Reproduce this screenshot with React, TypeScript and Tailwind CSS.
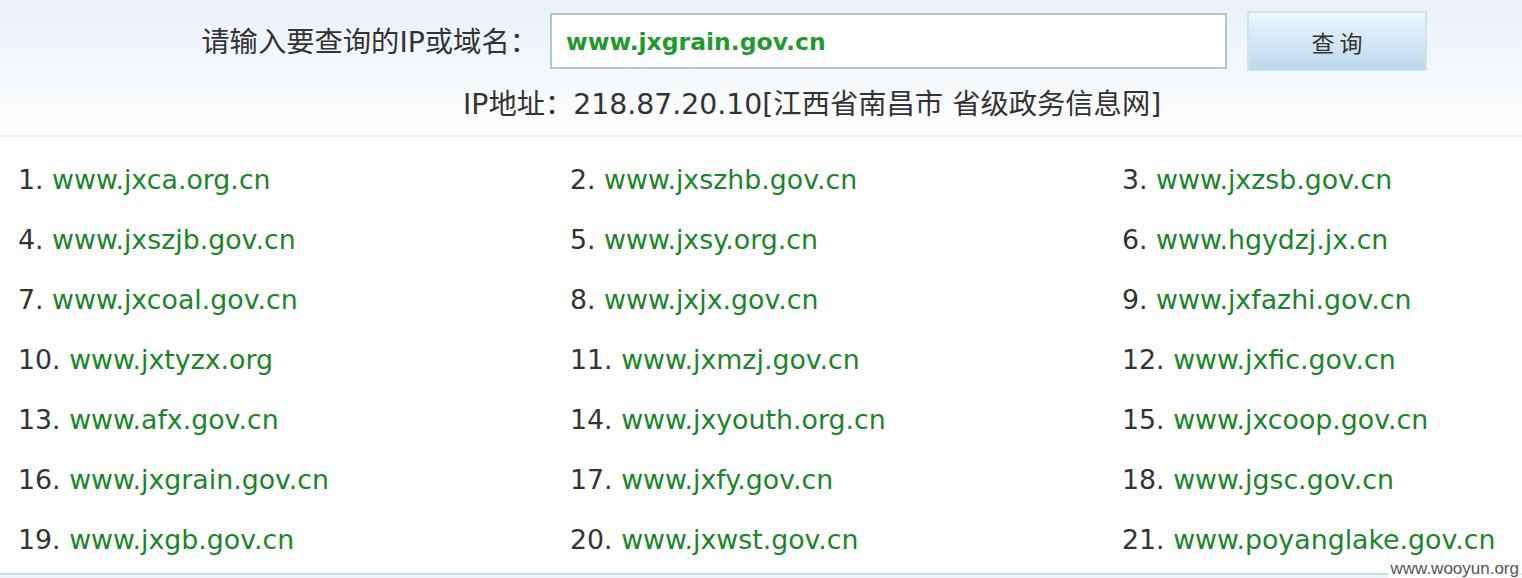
const sites = [
  'www.jxca.org.cn',
  'www.jxszhb.gov.cn',
  'www.jxzsb.gov.cn',
  'www.jxszjb.gov.cn',
  'www.jxsy.org.cn',
  'www.hgydzj.jx.cn',
  'www.jxcoal.gov.cn',
  'www.jxjx.gov.cn',
  'www.jxfazhi.gov.cn',
  'www.jxtyzx.org',
  'www.jxmzj.gov.cn',
  'www.jxfic.gov.cn',
  'www.afx.gov.cn',
  'www.jxyouth.org.cn',
  'www.jxcoop.gov.cn',
  'www.jxgrain.gov.cn',
  'www.jxfy.gov.cn',
  'www.jgsc.gov.cn',
  'www.jxgb.gov.cn',
  'www.jxwst.gov.cn',
  'www.poyanglake.gov.cn',
];

export default function App() {
  return (
    <div className="relative h-[578px] w-[1522px] overflow-hidden bg-white text-[#333]">
      {/* search header */}
      <div className="h-[137px] border-b-2 border-[#e6edf2] bg-gradient-to-b from-[#e8f1f9] to-white">
        <div className="flex items-center pt-[11px]">
          <div className="h-[60px] w-[550px] pr-[12px] pt-[4px] text-right font-['DejaVu_Sans','Noto_Sans_CJK_SC',sans-serif] text-[28.3px] leading-[56px] text-[#333]">
            请输入要查询的IP或域名：
          </div>
          <div className="flex h-[56px] w-[677px] items-center border-2 border-[#a9c9d8] bg-white pl-[14px] pt-[4px] font-['DejaVu_Sans',sans-serif] text-[23.5px] font-bold text-[#1f9a2e]">
            www.jxgrain.gov.cn
          </div>
          <button className="ml-[20px] h-[60px] w-[180px] border-2 border-[#cfe2ee] bg-gradient-to-b from-[#eef6fc] to-[#bcd9ee] pt-[3px] font-['Noto_Sans_CJK_SC',sans-serif] text-[23px] text-[#333]">
            查 询
          </button>
        </div>
        <div className="pl-[463px] pt-[16px] font-['DejaVu_Sans','Noto_Sans_CJK_SC',sans-serif] text-[28.3px] leading-[36px] text-[#333]">
          IP地址：218.87.20.10[江西省南昌市 省级政务信息网]
        </div>
      </div>

      {/* result list */}
      <div className="grid grid-cols-[552px_552px_418px] pl-[18px] pt-[13px] font-['DejaVu_Sans',sans-serif] text-[26.8px]">
        {sites.map((s, i) => (
          <div key={s} className="h-[60px] whitespace-nowrap leading-[60px]">
            <span className="text-[#333]">{i + 1}. </span>
            <span className="text-[#1a8529]">{s}</span>
          </div>
        ))}
      </div>

      <div className="absolute bottom-0 left-0 h-[5px] w-full border-t-2 border-[#c4dbea] bg-[#eef5fb]" />
      <div className="absolute bottom-0 right-[1px] bg-white px-[2px] font-['Liberation_Sans',sans-serif] text-[17px] leading-[19px] text-[#555]">
        www.wooyun.org
      </div>
    </div>
  );
}
